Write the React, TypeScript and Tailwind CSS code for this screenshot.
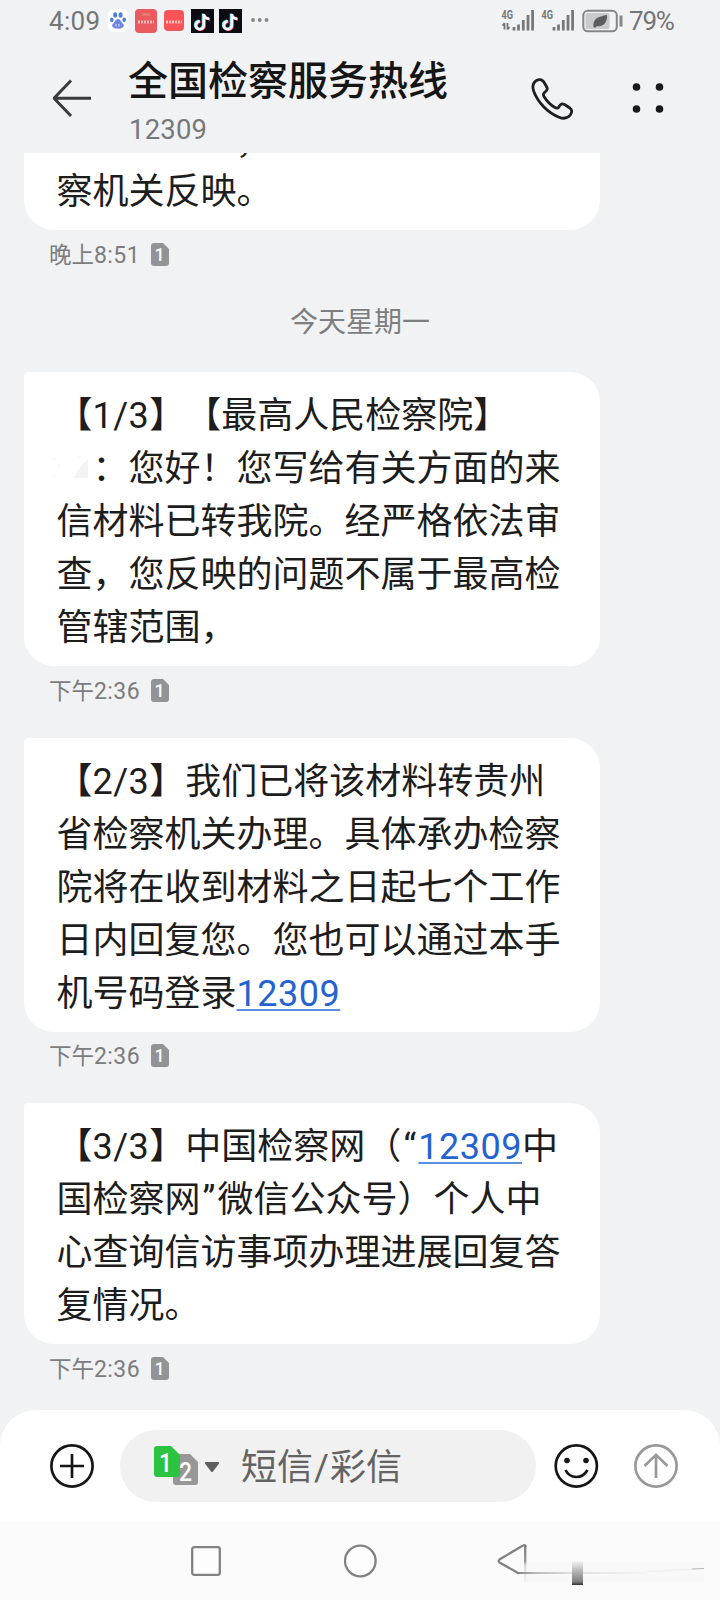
import type { ReactNode } from "react";

const cjk = "font-[Roboto,'Noto_Sans_CJK_SC',sans-serif] [text-spacing-trim:space-all]";

function Num({ children }: { children: ReactNode }) {
  return <span className="tracking-[0.5px]">{children}</span>;
}

function Quote({ children }: { children: ReactNode }) {
  return <span className="inline-block w-[17px] text-center">{children}</span>;
}

function Link({ children }: { children: ReactNode }) {
  return (
    <a className="tracking-[0.5px] text-[#2463cf] underline decoration-[#5b8fe0] decoration-2 underline-offset-[3px]">
      {children}
    </a>
  );
}

function SimBadge() {
  return (
    <svg width="18" height="23" viewBox="0 0 18 23" className="-mt-[2px] shrink-0">
      <path d="M3 0H12L18 6V20Q18 23 15 23H3Q0 23 0 20V3Q0 0 3 0Z" fill="#929394" />
      <text x="8.6" y="18.2" textAnchor="middle" fontSize="18" fontFamily="Roboto" fontWeight="500" fill="#f7f7f7">
        1
      </text>
    </svg>
  );
}

function Stamp({ day, time }: { day: string; time: string }) {
  return (
    <div className="flex h-[49px] items-center gap-3 pl-[49px] pt-[1px] text-[22.5px] leading-none text-[#7b7c7e]">
      <span className="w-[90px] whitespace-nowrap">
        {day}
        <span className="text-[23px] tracking-[0.4px]">{time}</span>
      </span>
      <SimBadge />
    </div>
  );
}

function Bubble({ lines, className = "" }: { lines: ReactNode[]; className?: string }) {
  return (
    <div
      className={`ml-6 w-[576px] rounded-[30px] rounded-tl-[4px] bg-white pl-[32.5px] pt-[18px] pb-[11px] text-[36px] leading-[53px] text-[#1d1d1d] ${className}`}
    >
      {lines.map((line, i) => (
        <div key={i} className="h-[53px] whitespace-pre">
          {line}
        </div>
      ))}
    </div>
  );
}

function Signal({ arrows }: { arrows?: boolean }) {
  return (
    <svg width="34" height="24" viewBox="0 0 34 24">
      <text x="0.500" y="9.500" fontSize="12" fontWeight="700" fontFamily="Roboto" fill="#777" textLength="11.500" lengthAdjust="spacingAndGlyphs">
        4G
      </text>
      {arrows && <path d="M3.5 14V20.5M1.5 16.500L3.5 14M6.5 14V20.5M8.5 18L6.5 20.5" stroke="#777" strokeWidth="1.8" fill="none" />}
      <path d="M13 21.5V18M17.5 21.5V15.5M22.3 21.5V11M27 21.5V6M31.6 21.5V1" stroke="#777" strokeWidth="2.8" />
    </svg>
  );
}

function Note() {
  return (
    <svg width="23" height="24" viewBox="0 0 23 24">
      <rect width="23" height="24" fill="#0c0b14" />
      <g fill="none" strokeWidth="2.6">
        <path d="M12 4.5V15.5A4 4 0 1 1 8 11.8M12 5Q13 9 17.5 9.4" stroke="#39d5dc" />
        <path d="M13.6 5.5V16.5A4 4 0 1 1 9.6 12.8M13.6 6Q14.6 10 19 10.4" stroke="#ee4a6a" />
        <path d="M12.8 5V16A4 4 0 1 1 8.8 12.3M12.8 5.5Q13.8 9.5 18.2 9.9" stroke="#fff" />
      </g>
    </svg>
  );
}

function StatusBar() {
  return (
    <div className="flex h-[41px] items-center pl-[49px] pr-[44px] text-[26px] leading-none text-[#747577]">
      <span className="w-[59px] tracking-[0.3px]">4:09</span>
      <svg width="20" height="23" viewBox="0 0 20 23">
        <rect width="20" height="23" rx="6" fill="#fff" />
        <g fill="#4a7fdc">
          <ellipse cx="7.2" cy="6" rx="2" ry="2.8" />
          <ellipse cx="12.6" cy="6" rx="2" ry="2.8" />
          <ellipse cx="3.8" cy="10.8" rx="1.8" ry="2.4" />
          <ellipse cx="16.2" cy="10.8" rx="1.8" ry="2.4" />
        </g>
        <path d="M10 10C7.500 10 7 13 5 14.800C3 17 5 20 10 19.500C15 20 17 17 15 14.800C13 13 12.500 10 10 10Z" fill="#6d86e0" />
        <path d="M8 15V17.500M11 15V17.500" stroke="#dfe4fa" strokeWidth="1" fill="none" />
      </svg>
      <svg className="ml-[7px]" width="22" height="24" viewBox="0 0 22 24">
        <rect width="22" height="24" rx="4" fill="#ea5a5e" />
        <path d="M3 13H19" stroke="#f7b6b4" strokeWidth="3" strokeDasharray="2 1" />
        <path d="M7 5.500H15" stroke="#f08080" strokeWidth="2" />
      </svg>
      <svg className="ml-[7px]" width="20" height="21" viewBox="0 0 20 21">
        <rect width="20" height="21" rx="4" fill="#fa5358" />
        <path d="M2 12H18" stroke="#fdc0bd" strokeWidth="3" strokeDasharray="2 1" />
      </svg>
      <span className="ml-[7px] flex gap-[5px]">
        <Note />
        <Note />
      </span>
      <svg className="ml-[9px] -mt-[1px]" width="18" height="4" viewBox="0 0 18 4" fill="#838486">
        <circle cx="2" cy="2" r="1.900" />
        <circle cx="8.700" cy="2" r="1.900" />
        <circle cx="15.500" cy="2" r="1.900" />
      </svg>
      <span className="ml-auto flex items-center">
        <Signal arrows />
        <span className="ml-[6px] flex">
          <Signal />
        </span>
        <svg className="ml-[7px]" width="42" height="24" viewBox="0 0 42 24">
          <rect x="1.300" y="1.800" width="33.500" height="20.500" rx="4.500" fill="#f1f2f4" stroke="#858688" strokeWidth="2" />
          <rect x="3.500" y="4" width="24" height="16" rx="2" fill="#c9cacc" />
          <path d="M11.500 18C10.500 10 16 7.500 25 6C25.500 13 21.500 18.500 15 17L13 18.800Z" fill="#5c5d5f" />
          <path d="M39 6.500V17.500" stroke="#858688" strokeWidth="3" />
        </svg>
        <span className="ml-[5px] w-[47px] tracking-[-1.200px]">79%</span>
      </span>
    </div>
  );
}

function Header() {
  return (
    <header className="flex h-[112px]">
      <svg className="ml-[51px] mt-[37px]" width="42" height="40" viewBox="0 0 42 40" fill="none" stroke="#3b3b3b" strokeWidth="3">
        <path d="M40 20.300H3M20 2.500L3 20.300L20 38" strokeLinejoin="bevel" />
      </svg>
      <div className="ml-[35px] flex w-[400px] flex-col">
        <h1 className="mt-[12px] h-[58px] whitespace-nowrap text-[40px] font-medium leading-[58px] text-[#151515]">全国检察服务热线</h1>
        <span className="mt-[2px] pl-[1px] text-[27.500px] leading-[34px] tracking-[0.200px] text-[#77787a]">12309</span>
      </div>
      <svg className="ml-[2px] mt-[35px]" width="44" height="46" viewBox="0 0 44 46" fill="none" stroke="#1f1f1f" strokeWidth="2.800" strokeLinejoin="round">
        <path d="M6.500 4.500C10 2.500 13 4 14.500 7L17 11.500C18 14 16.500 15.200 14.500 16.500C13 17.700 13 18.700 14 20.500C17 25.500 20.500 29 25 31.500C27 32.600 28 32.500 29 30.700C30.200 28.200 32 27.300 34.500 28.500L39.500 31.700C42.300 33.500 42.300 36.200 40.300 39C37.500 42.500 33.500 43 29 41.200C17.500 36.500 8 26.500 3.800 15.500C2.200 11 2.800 6.800 6.500 4.500Z" />
      </svg>
      <svg className="ml-[58px] mt-[41px]" width="32" height="32" viewBox="0 0 32 32" fill="#191919">
        <circle cx="4.500" cy="5" r="3.800" />
        <circle cx="27.500" cy="5" r="3.800" />
        <circle cx="4.500" cy="27" r="3.800" />
        <circle cx="27.500" cy="27" r="3.800" />
      </svg>
    </header>
  );
}

function Smudge() {
  return (
    <svg className="-ml-[7px] inline-block align-[-1px]" width="43" height="26" viewBox="0 0 43 26">
      <path d="M38 3V22H24Q28 12 38 3Z" fill="#f3f3f3" />
      <path d="M2 2L6 4M9 8V13M3 18L6 21M28 1L33 0" stroke="#fafafa" strokeWidth="2" />
    </svg>
  );
}

function Composer() {
  return (
    <div className="flex h-[112px] items-center rounded-t-[36px] bg-white pl-[50px]">
      <svg width="44" height="44" viewBox="0 0 44 44" fill="none" stroke="#161616" strokeWidth="2.700">
        <circle cx="22" cy="22" r="20.600" />
        <path d="M10 22H34M22 10V34" />
      </svg>
      <div className="ml-[26px] flex h-[72px] w-[416px] items-center rounded-full bg-[#f1f1f1] pl-[34px]">
        <svg width="66" height="42" viewBox="0 0 66 42" fontFamily="Roboto" fontWeight="500" fill="#fff">
          <path d="M22 9H36L44 17V37Q44 40 41 40H22Q19 40 19 37V12Q19 9 22 9Z" fill="#979797" />
          <path d="M3 1H17L26 10V29Q26 32 23 32H3Q0 32 0 29V4Q0 1 3 1Z" fill="#2cc341" />
          <text x="11.500" y="27" fontSize="26" textAnchor="middle" textLength="13" lengthAdjust="spacingAndGlyphs">1</text>
          <text x="31.500" y="35.500" fontSize="25" textAnchor="middle" textLength="13" lengthAdjust="spacingAndGlyphs">2</text>
          <path d="M51.500 17H64.500Q65.500 17.500 65 18.500L59 26.500Q58 27.500 57 26.500L51 18.500Q50.500 17.500 51.500 17Z" fill="#5f5f5f" />
        </svg>
        <span className="ml-[21px] whitespace-nowrap pt-[5px] text-[36px] leading-[53px] text-[#636363]">
          短信<span className="px-[1px]">/</span>彩信
        </span>
      </div>
      <svg className="ml-[18px]" width="45" height="44" viewBox="0 0 45 44" fill="none" stroke="#161616" strokeWidth="2.700">
        <circle cx="22.300" cy="22" r="20.600" />
        <path d="M11.500 26Q15 33 22.300 33Q29.500 33 33.500 26" />
        <circle cx="13" cy="16.500" r="2.800" fill="#161616" stroke="none" />
        <circle cx="32" cy="16.500" r="2.800" fill="#161616" stroke="none" />
      </svg>
      <svg className="ml-[35px]" width="44" height="44" viewBox="0 0 44 44" fill="none" stroke="#999" strokeWidth="2.700">
        <circle cx="22" cy="22" r="20.600" />
        <path d="M22 34V11M10.500 22L22 10.800L33.500 22" />
      </svg>
    </div>
  );
}

function NavBar() {
  return (
    <nav className="flex h-[78px] items-start bg-[#fafafa] pl-[191px] pt-[22px]">
      <svg className="mt-[2px]" width="30" height="30" viewBox="0 0 30 30" fill="#fdfdfd" stroke="#828282" strokeWidth="2.300">
        <rect x="1.200" y="1.200" width="27.600" height="27.600" rx="2" />
      </svg>
      <svg className="ml-[123px]" width="33" height="34" viewBox="0 0 33 34" fill="#fdfdfd" stroke="#828282" strokeWidth="2.300">
        <circle cx="16.300" cy="17" r="15.300" />
      </svg>
      <svg className="ml-[120px]" width="208" height="44" viewBox="0 0 208 44" fill="none">
        <defs>
          <linearGradient id="edge" x1="0" y1="0" x2="0" y2="1">
            <stop offset="0" stopColor="#828282" />
            <stop offset="0.420" stopColor="#999" />
            <stop offset="0.550" stopColor="#ddd" />
            <stop offset="1" stopColor="#f2f2f2" />
          </linearGradient>
          <linearGradient id="block" x1="0" y1="0" x2="0" y2="1">
            <stop offset="0" stopColor="#f5f5f5" />
            <stop offset="0.400" stopColor="#b9b9b9" />
            <stop offset="0.850" stopColor="#808080" />
            <stop offset="1" stopColor="#333" />
          </linearGradient>
          <linearGradient id="line" x1="0" y1="0" x2="1" y2="0">
            <stop offset="0" stopColor="#828282" />
            <stop offset="0.150" stopColor="#bbb" />
            <stop offset="0.400" stopColor="#ddd" />
            <stop offset="1" stopColor="#f5f5f5" />
          </linearGradient>
        </defs>
        <rect x="30" y="18" width="177" height="21" fill="#f8f8f8" />
        <path d="M26 1.500L2.500 15.500Q0.800 17 2.500 18.500L22 29.500" stroke="#828282" strokeWidth="2.300" />
        <path d="M26 1.500Q28.500 0.500 28.800 3" stroke="#828282" strokeWidth="2.300" />
        <rect x="27" y="2" width="2.400" height="36" fill="url(#edge)" />
        <rect x="20" y="28" width="130" height="2" fill="url(#line)" />
        <path d="M150 27.500L207 24.500" stroke="#f0f0f0" strokeWidth="1.500" />
        <path d="M195 25L207 24.500" stroke="#bbb" strokeWidth="1" />
        <rect x="75" y="17" width="11" height="24" fill="url(#block)" />
      </svg>
    </nav>
  );
}

export default function App() {
  return (
    <div className={`flex h-[1600px] w-[720px] flex-col overflow-hidden bg-[#f1f2f4] ${cjk}`}>
      <StatusBar />
      <Header />
      <main className="flex h-[1257px] flex-col overflow-hidden">
        <Bubble
          className="-mt-[58px] shrink-0"
          lines={[<span className="ml-[179px] inline-block pt-[3px]">，</span>, "察机关反映。"]}
        />
        <Stamp day="晚上" time="8:51" />
        <div className="flex h-[93px] items-center justify-center pb-[5px] text-[28px] leading-none text-[#7d7e80]">今天星期一</div>
        <Bubble
          lines={[
            <>【<Num>1/3</Num>】【最高人民检察院】</>,
            <><Smudge />：您好！您写给有关方面的来</>,
            "信材料已转我院。经严格依法审",
            "查，您反映的问题不属于最高检",
            "管辖范围，",
          ]}
        />
        <Stamp day="下午" time="2:36" />
        <Bubble
          className="mt-[22.5px]"
          lines={[
            <>【<Num>2/3</Num>】我们已将该材料转贵州</>,
            "省检察机关办理。具体承办检察",
            "院将在收到材料之日起七个工作",
            "日内回复您。您也可以通过本手",
            <>机号码登录<Link>12309</Link></>,
          ]}
        />
        <Stamp day="下午" time="2:36" />
        <Bubble
          className="mt-[22.5px]"
          lines={[
            <>【<Num>3/3</Num>】中国检察网（<Quote>“</Quote><Link>12309</Link>中</>,
            <>国检察网<Quote>”</Quote>微信公众号）个人中</>,
            "心查询信访事项办理进展回复答",
            "复情况。",
          ]}
        />
        <Stamp day="下午" time="2:36" />
      </main>
      <Composer />
      <NavBar />
    </div>
  );
}
